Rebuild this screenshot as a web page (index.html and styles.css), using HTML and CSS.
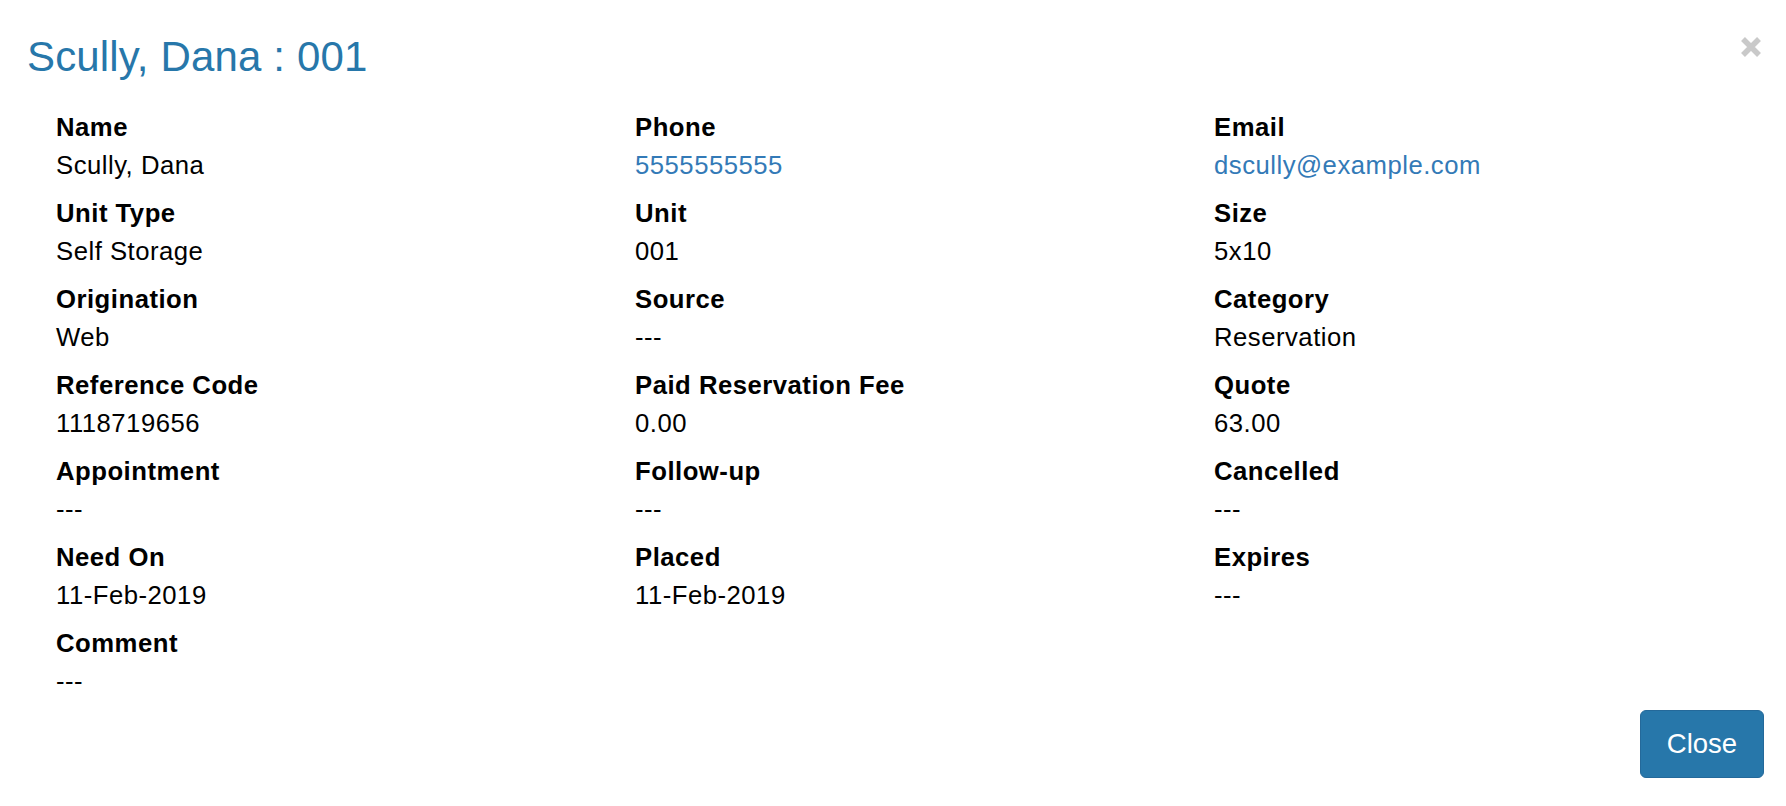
FILE: index.html
```html
<!DOCTYPE html>
<html>
<head>
<meta charset="utf-8">
<title>Scully, Dana : 001</title>
<link rel="stylesheet" href="styles.css">
</head>
<body>
<div class="modal">
  <div class="modal-header">
    <h4 class="modal-title">Scully, Dana : 001</h4>
    <button class="close" aria-label="Close">
      <svg width="22" height="22" viewBox="0 0 22 22"><path d="M3 3 L19 19 M19 3 L3 19" stroke="#c9c9c9" stroke-width="5.5" stroke-linecap="butt"/></svg>
    </button>
  </div>
  <div class="modal-body">
    <div class="field"><div class="dt">Name</div><div class="dd">Scully, Dana</div></div>
    <div class="field"><div class="dt">Phone</div><div class="dd"><a href="#">5555555555</a></div></div>
    <div class="field"><div class="dt">Email</div><div class="dd"><a href="#">dscully@example.com</a></div></div>

    <div class="field"><div class="dt">Unit Type</div><div class="dd">Self Storage</div></div>
    <div class="field"><div class="dt">Unit</div><div class="dd">001</div></div>
    <div class="field"><div class="dt">Size</div><div class="dd">5x10</div></div>

    <div class="field"><div class="dt">Origination</div><div class="dd">Web</div></div>
    <div class="field"><div class="dt">Source</div><div class="dd">---</div></div>
    <div class="field"><div class="dt">Category</div><div class="dd">Reservation</div></div>

    <div class="field"><div class="dt">Reference Code</div><div class="dd">1118719656</div></div>
    <div class="field"><div class="dt">Paid Reservation Fee</div><div class="dd">0.00</div></div>
    <div class="field"><div class="dt">Quote</div><div class="dd">63.00</div></div>

    <div class="field"><div class="dt">Appointment</div><div class="dd">---</div></div>
    <div class="field"><div class="dt">Follow-up</div><div class="dd">---</div></div>
    <div class="field"><div class="dt">Cancelled</div><div class="dd">---</div></div>

    <div class="field"><div class="dt">Need On</div><div class="dd">11-Feb-2019</div></div>
    <div class="field"><div class="dt">Placed</div><div class="dd">11-Feb-2019</div></div>
    <div class="field"><div class="dt">Expires</div><div class="dd">---</div></div>

    <div class="field"><div class="dt">Comment</div><div class="dd">---</div></div>
  </div>
  <div class="modal-footer">
    <button class="btn-primary">Close</button>
  </div>
</div>
</body>
</html>
```

FILE: styles.css
```css
html, body {
  margin: 0;
  padding: 0;
  background: #ffffff;
}
body {
  font-family: "Liberation Sans", Arial, Helvetica, sans-serif;
  color: #000000;
}
.modal {
  padding: 0 22px 0 27px;
}
.modal-header {
  display: flex;
  justify-content: space-between;
  align-items: flex-start;
  padding-top: 34px;
}
.modal-title {
  margin: 0;
  font-size: 42px;
  line-height: 46px;
  font-weight: normal;
  color: #2777aa;
  letter-spacing: 0.15px;
}
.close {
  margin: 2px 2px 0 0;
  padding: 0;
  border: 0;
  background: transparent;
  width: 22px;
  height: 22px;
  display: block;
}
.close svg {
  display: block;
}
.modal-body {
  padding-top: 28px;
  display: grid;
  grid-template-columns: repeat(3, 1fr);
}
.field {
  padding-left: 29px;
  margin-bottom: 10px;
  font-size: 25.7px;
  line-height: 38px;
  letter-spacing: 0.5px;
}
.dt {
  font-weight: bold;
}
.dd a {
  color: #337ab7;
  text-decoration: none;
}
.modal-footer {
  display: flex;
  justify-content: flex-end;
}
.btn-primary {
  width: 124px;
  height: 68px;
  border: 1px solid #24699a;
  border-radius: 6px;
  background: #2777aa;
  color: #ffffff;
  font-family: "Liberation Sans", Arial, Helvetica, sans-serif;
  font-size: 27.5px;
  padding: 0;
}
```
